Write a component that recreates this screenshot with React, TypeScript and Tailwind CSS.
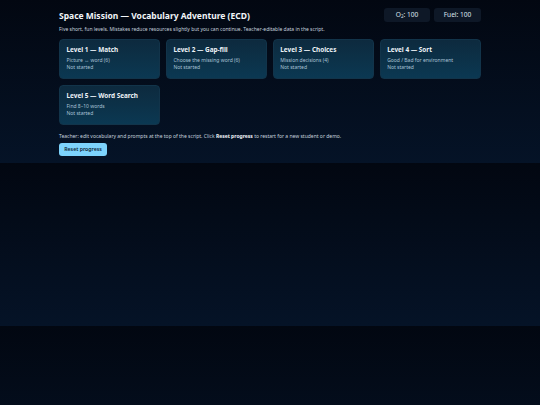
import React from 'react'

const levels = [
  { title: 'Level 1 — Match', desc: 'Picture ↔ word (6)' },
  { title: 'Level 2 — Gap-fill', desc: 'Choose the missing word (6)' },
  { title: 'Level 3 — Choices', desc: 'Mission decisions (4)' },
  { title: 'Level 4 — Sort', desc: 'Good / Bad for environment' },
  { title: 'Level 5 — Word Search', desc: 'Find 8–10 words' }
]

const App: React.FC = () => {
  return (
    <div
      className="min-h-[405px] w-full bg-[linear-gradient(180deg,#020711_0%,#051327_100%)] bg-[length:100%_163px] bg-repeat-y text-[#e2e8f0]"
      style={{ fontFamily: '"Noto Sans", "Open Sans", sans-serif' }}
    >
      <div className="mx-auto w-[422px] pt-[8px]">
        {/* Header */}
        <div className="flex items-start justify-between">
          <h1 className="mt-[1px] text-[8.5px] font-bold leading-[14px] text-[#f1f5f9]">
            Space Mission — Vocabulary Adventure (ECD)
          </h1>
          <div className="flex gap-[4px]">
            <div className="flex h-[14px] w-[46px] items-center justify-center rounded-[3px] bg-[#0e1827] text-[6.6px] text-[#dbe4ee]">
              O<sub className="text-[4.5px]">2</sub>: 100
            </div>
            <div className="flex h-[14px] w-[47px] items-center justify-center rounded-[3px] bg-[#0e1827] text-[6.6px] text-[#dbe4ee]">
              Fuel: 100
            </div>
          </div>
        </div>

        <p className="mt-[2px] text-[5px] leading-[8px] text-[#c6d2de]">
          Five short, fun levels. Mistakes reduce resources slightly but you can continue. Teacher-editable data in the script.
        </p>

        {/* Levels */}
        <div className="mt-[6px] grid grid-cols-4 gap-[5.5px]">
          {levels.map(l => (
            <div
              key={l.title}
              className="h-[40px] rounded-[4px] border border-[#12344a] bg-[linear-gradient(180deg,#0d2a3e_0%,#0b3852_100%)] px-[6.5px] pt-[5px]"
            >
              <div className="text-[6.4px] font-bold leading-[10px] text-[#eef3f8]">{l.title}</div>
              <div className="mt-[2px] text-[5px] leading-[7px] text-[#a9c3d6]">{l.desc}</div>
              <div className="text-[5px] leading-[7px] text-[#a9c3d6]">Not started</div>
            </div>
          ))}
        </div>

        <p className="mt-[7px] text-[5px] leading-[8px] text-[#c6d2de]">
          Teacher: edit vocabulary and prompts at the top of the script. Click <b className="text-[#eef3f8]">Reset progress</b> to restart for a new student or demo.
        </p>

        <button className="mt-[3px] block h-[13px] w-[48px] rounded-[3px] bg-[#7dd3fc] text-[5.2px] font-semibold leading-[13px] text-[#0b2233]">
          Reset progress
        </button>
      </div>
    </div>
  )
}

export default App
